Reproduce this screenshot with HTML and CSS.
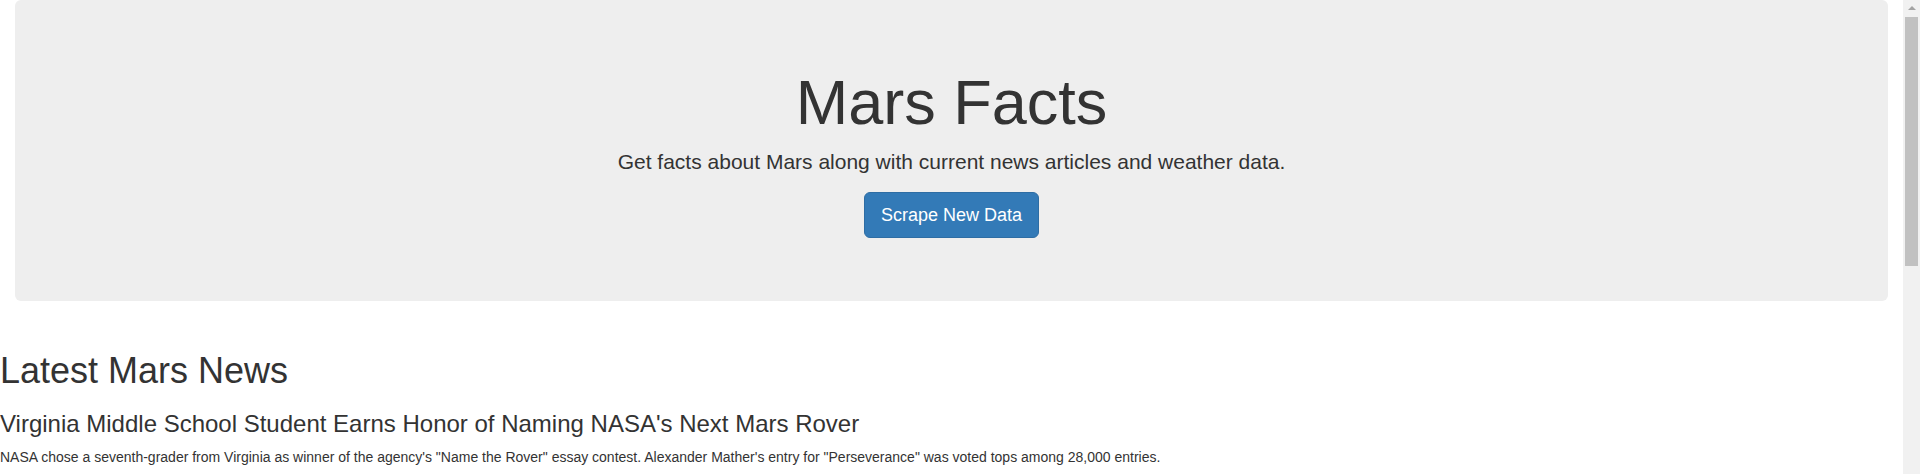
FILE: index.html
```html
<!DOCTYPE html>
<html lang="en">
<head>
<meta charset="utf-8">
<title>Mission to Mars</title>
<link rel="stylesheet" href="styles.css">
</head>
<body>
<div class="viewport">
  <div class="page">
    <div class="container-fluid">
      <div class="jumbotron">
        <h1>Mars Facts</h1>
        <p>Get facts about Mars along with current news articles and weather data.</p>
        <p><a class="btn btn-primary btn-lg" href="#" role="button">Scrape New Data</a></p>
      </div>
    </div>
    <div class="news">
      <h1>Latest Mars News</h1>
      <h3>Virginia Middle School Student Earns Honor of Naming NASA's Next Mars Rover</h3>
      <p>NASA chose a seventh-grader from Virginia as winner of the agency's "Name the Rover" essay contest. Alexander Mather's entry for "Perseverance" was voted tops among 28,000 entries.</p>
    </div>
  </div>
  <div class="scrollbar">
    <div class="scroll-arrow"></div>
    <div class="scroll-thumb"></div>
  </div>
</div>
</body>
</html>
```

FILE: styles.css
```css
html, body {
  margin: 0;
  padding: 0;
  height: 474px;
  overflow: hidden;
  background: #fff;
}

body {
  font-family: "Liberation Sans", Arial, Helvetica, sans-serif;
  font-size: 14px;
  line-height: 1.42857143;
  color: #333;
}

.viewport {
  display: flex;
  height: 474px;
  overflow: hidden;
}

.page {
  flex: 1 1 auto;
  min-width: 0;
}

.container-fluid {
  display: flow-root;
  padding: 0 15px;
}

.jumbotron {
  background: #eee;
  border-radius: 6px;
  padding: 48px 60px;
  margin: 0 0 30px;
  text-align: center;
}

.jumbotron h1 {
  font-size: 63px;
  font-weight: 500;
  line-height: 1.1;
  margin: 20px 0 10px;
}

.jumbotron p {
  font-size: 21px;
  font-weight: 200;
  margin: 0 0 15px;
}

.btn {
  display: inline-block;
  text-decoration: none;
  border: 1px solid transparent;
  vertical-align: middle;
  white-space: nowrap;
}

.btn-primary {
  color: #fff;
  background-color: #337ab7;
  border-color: #2e6da4;
}

.btn-lg {
  padding: 10px 16px;
  font-size: 18px;
  line-height: 1.3333333;
  border-radius: 6px;
}

.news h1 {
  font-size: 36px;
  font-weight: 500;
  line-height: 1.1;
  margin: 20px 0 10px;
}

.news h3 {
  font-size: 24px;
  font-weight: 500;
  line-height: 1.1;
  margin: 20px 0 10px;
}

.news p {
  margin: 0 0 10px;
}

.scrollbar {
  flex: 0 0 17px;
  width: 17px;
  background: #f1f1f1;
  display: flex;
  flex-direction: column;
  align-items: center;
}

.scroll-arrow {
  margin-top: 6px;
  width: 0;
  height: 0;
  border-left: 4px solid transparent;
  border-right: 4px solid transparent;
  border-bottom: 4px solid #a3a3a3;
}

.scroll-thumb {
  margin-top: 7px;
  width: 13px;
  height: 249px;
  background: #c1c1c1;
}
```
